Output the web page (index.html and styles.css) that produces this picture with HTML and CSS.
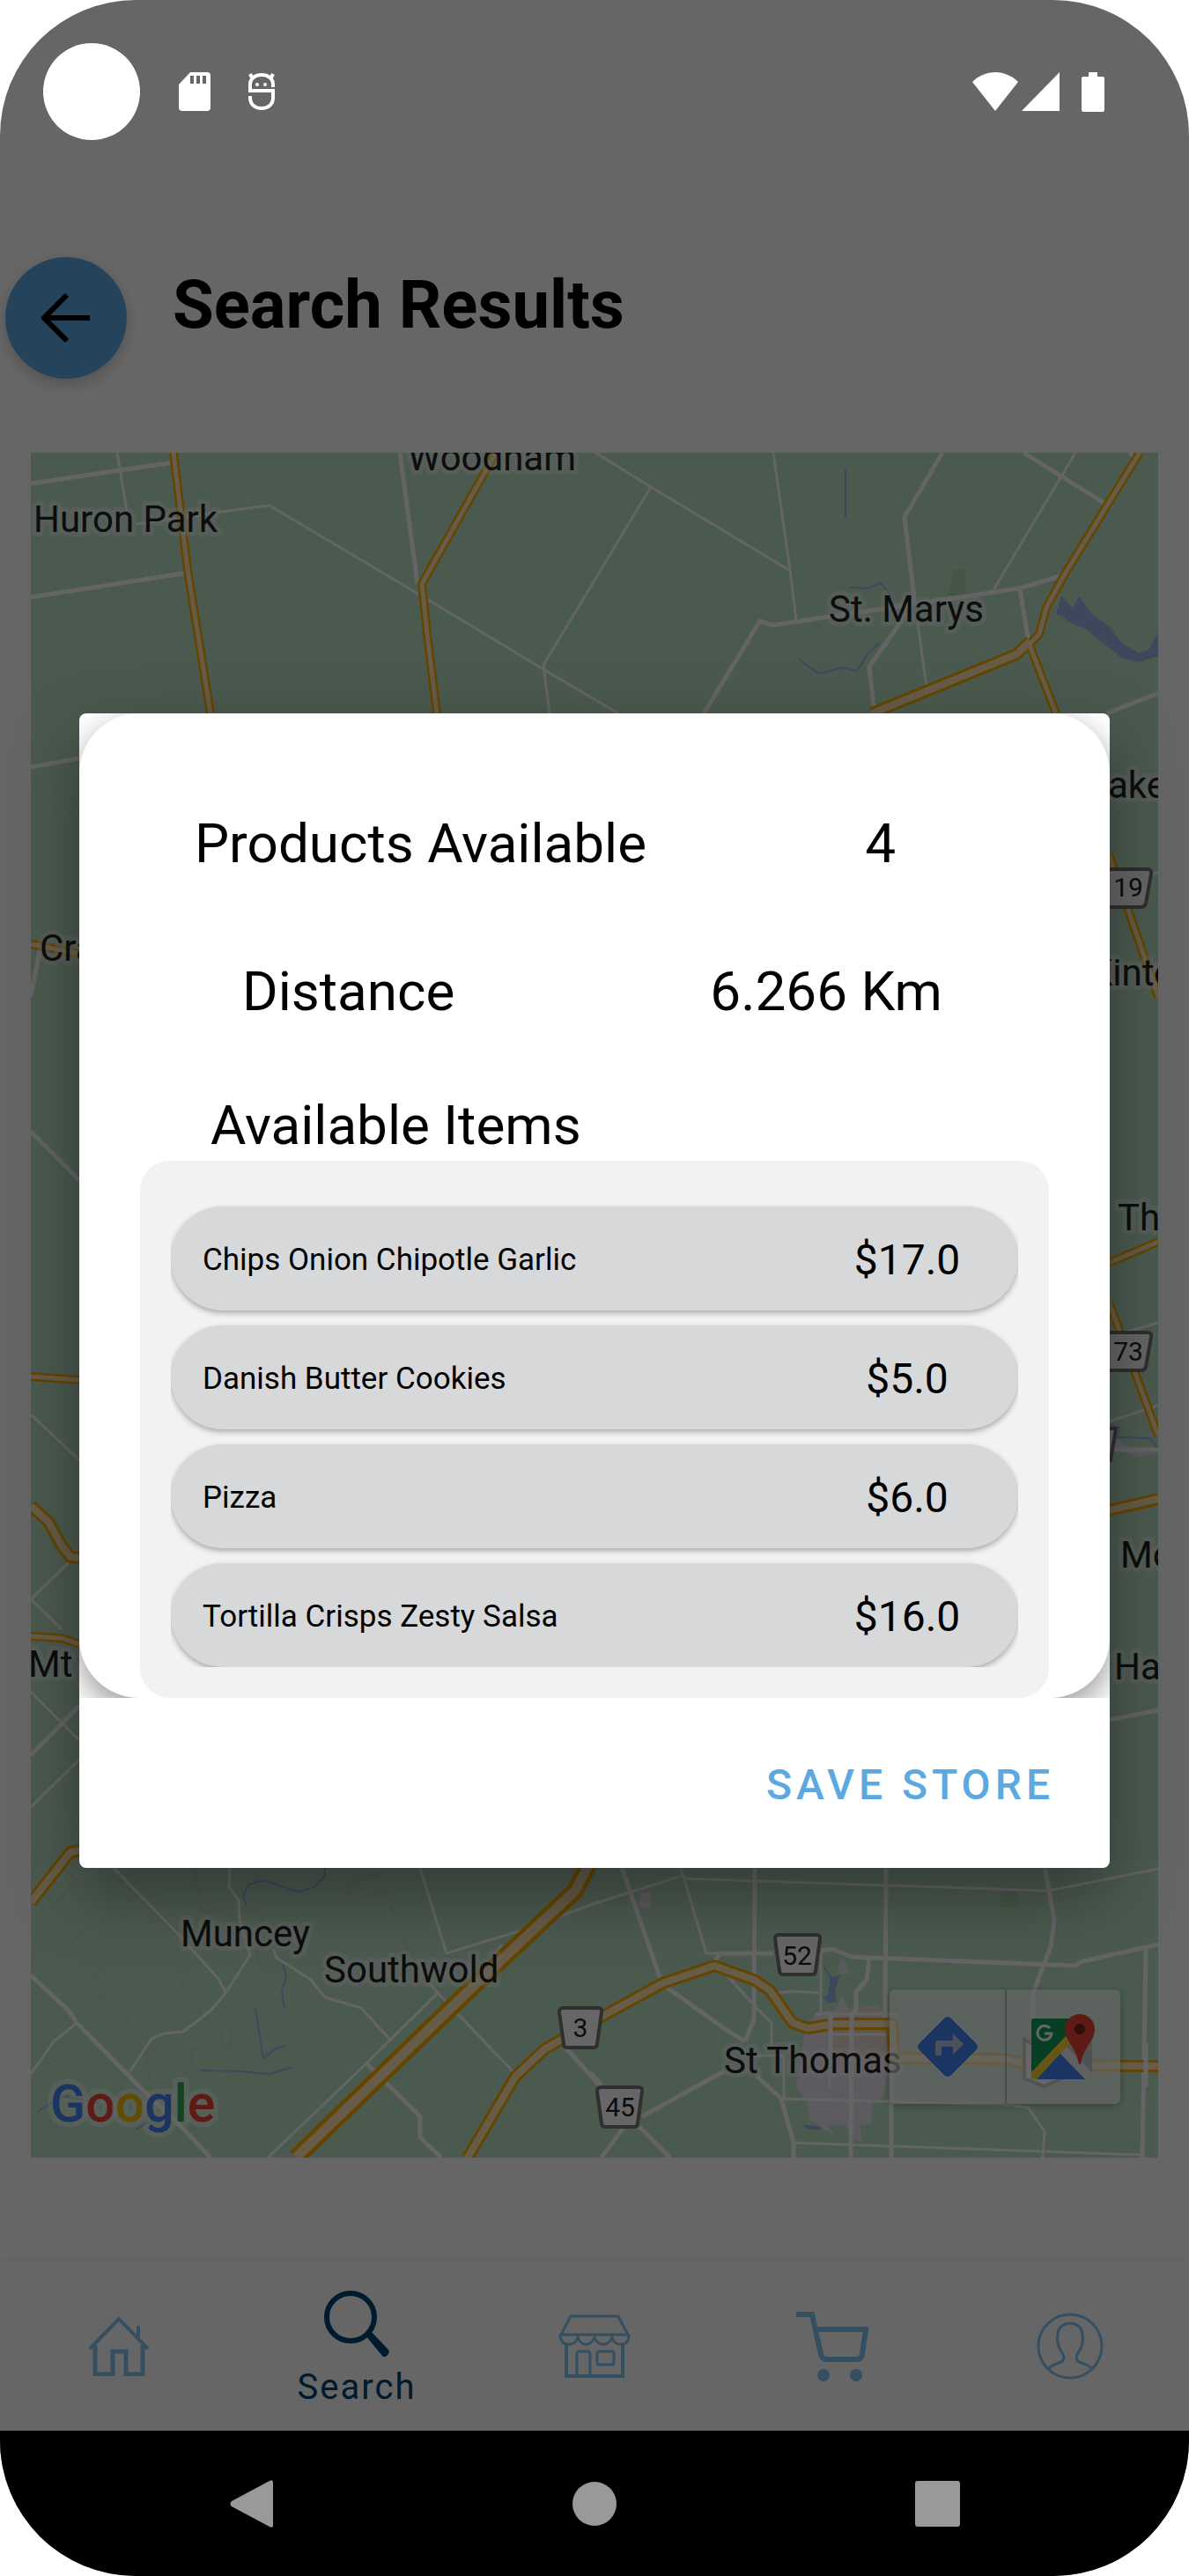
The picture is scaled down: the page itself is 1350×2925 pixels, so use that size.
FILE: index.html
```html
<!DOCTYPE html>
<html lang="en">
<head>
<meta charset="utf-8">
<meta name="viewport" content="width=device-width, initial-scale=1">
<title>Search Results</title>
<link rel="stylesheet" href="styles.css">
</head>
<body>
<div class="phone">
  <header class="status">
    <div class="status__group">
      <span class="status__camera"></span>
      <svg class="status__sd" width="36" height="44" viewBox="0 0 36 44" aria-hidden="true"><path fill="#fff" d="M13 0h19a4 4 0 0 1 4 4v36a4 4 0 0 1-4 4H4a4 4 0 0 1-4-4V14z"/><path fill="#666" d="M13 4h4v9h-4zM20 4h4v9h-4zM27 4h4v9h-4z"/></svg>
      <svg class="status__bug" width="32" height="44" viewBox="0 0 32 44" aria-hidden="true"><g fill="none" stroke="#fff" stroke-width="4"><path d="M5 6 3 2M27 6l2-4M29 17V14C29 7 23 3 16 3S3 7 3 14v7h26v8c0 8-6 12-13 12S3 37 3 29v-2"/></g><circle cx="11" cy="14" r="2" fill="#fff"/><circle cx="20" cy="14" r="2" fill="#fff"/></svg>
    </div>
    <div class="status__group">
      <svg width="52" height="44" viewBox="0 0 52 44" aria-hidden="true"><path fill="#fff" d="M26 0c10 0 19 4 26 11L26 44 0 11C7 4 16 0 26 0z"/></svg>
      <svg class="status__signal" width="43" height="44" viewBox="0 0 43 44" aria-hidden="true"><path fill="#fff" d="M43 0v44H0z"/></svg>
      <svg class="status__battery" width="26" height="45" viewBox="0 0 26 45" aria-hidden="true"><path fill="#fff" d="M8 0h10v5h6a2 2 0 0 1 2 2v36a2 2 0 0 1-2 2H2a2 2 0 0 1-2-2V7a2 2 0 0 1 2-2h6z"/></svg>
    </div>
  </header>

  <main class="app">
    <div class="header">
      <button class="back" type="button" aria-label="Back"><svg width="56" height="56" viewBox="0 0 56 56"><path d="M55 28H4M29 2 3 28l26 26" fill="none" stroke="#000" stroke-width="6"/></svg></button>
      <h1 class="header__title">Search Results</h1>
    </div>

    <div class="map">
      <svg class="map__canvas" viewBox="35 514 1280 1936" role="img" aria-label="Map of nearby stores">
        <defs>
          <path id="thin" d="M197 514 213 647 239 810M563 514 479 663 485 720 496 810M1168 730 1199 810M1294 514 1210 650 1188 690 1180 720 1168 732M35 1072 90 1083M35 1563 90 1567M35 1858 70 1860 90 1867M1259 970 1315 1132M1259 1434 1315 1410M1259 1478 1315 1630"/>
          <path id="wide" d="M1170 728 1154 743 990 810M35 1710 55 1728 70 1755 80 1768 92 1769M1259 1715 1315 1702M35 2160 80 2103 92 2101M531 2450 585 2358 618 2327 683 2290 752 2252 811 2232 856 2248 874 2260 900 2297 917 2303 948 2298H1013L1015 2337 1143 2338 1169 2345 1315 2346"/>
          <path id="main" d="M668 2118 653 2147 540 2253 336 2450"/>
        </defs>
        <rect class="land" x="35" y="514" width="1280" height="1936"/>
        <path class="park" d="M1082 646h14v30h-20zM1137 2148h19v18h-19z"/>
        <path class="town" d="M926 2285 995 2277 1013 2293 1004 2380 991 2387 989 2412 976 2413 979 2432 965 2428 961 2413H939L948 2425 919 2407 917 2387 904 2370 913 2310zM957 2223l8 18h-15zM956 2266l8 18h-16zM728 2149l11 1v17l-14-3zM1259 1628l22 14 34 7-20 6-30-10z"/>
        <path class="sand" d="M969 2277h26l17 22v38l-73-10v-20l26-27z"/>
        <path class="water" d="M1199 697 1205 677 1218 690 1225 677 1240 697 1261 713 1274 730 1292 741 1304 738 1315 718V745L1292 752 1273 747 1248 727 1231 713 1216 708 1206 700zM943 2245l11-2-6 17 2 12-9 3-7-7 6-3zM911 2412l21 3v4l-17-2z"/>
        <path class="creek" d="M906 748 930 765 956 758 973 762 987 740 999 730M960 533v54M965 667l20 1 15-6 16 20M369 2118v12l-13 13-18 5-39-13-17 5-6 13 4 12M321 2230l4 13-5 20 3 17M290 2280l5 33 4 24 13-10 13-5M228 2351l45 1 33 3 27-8M1259 1617l13 5-4 10 37 1 10 11M42 2398l30-18 40 8M154 2418l14-8M936 2233l8 14"/>
        <path class="bounds" d="M76 2125 87 2135 63 2162 78 2177 35 2227M93 2193 81 2207 120 2233 108 2243 118 2258 113 2267 127 2278 134 2272 146 2290 143 2300 157 2310 172 2315 165 2333 170 2362 186 2365M93 2193 122 2225 140 2215 147 2223 160 2212 175 2225 183 2213 194 2220 214 2240 205 2253 226 2275 227 2290M92 2228 83 2236 98 2249 109 2238M54 2234 64 2243 52 2256M221 2118 228 2172 271 2163M392 2142 434 2125M392 2142 398 2159 438 2147 464 2217M280 2165 297 2172 298 2190M290 2215 296 2232 321 2232M321 2282 412 2253M290 2280 300 2276 321 2282M204 2312 215 2326H237V2340M217 2326 218 2348 228 2351M227 2300H249L252 2322 262 2325 263 2300 247 2284M325 2322 326 2342 333 2347"/>
        <g class="road">
          <path d="M133 514 144 580M155 595 244 582 306 574 476 675 617 760 702 810M676 514 739 553 897 648 904 703M739 553 617 755 624 810M878 514 897 648M1042 707 1052 780M1221 514 1128 670M1259 808 1285 800M35 1606 90 1658M35 1816 78 1774M35 1816 70 1850M35 1921 90 1976M35 2052 90 1998M1259 1518 1315 1502M1259 1614 1315 1596M1300 993 1315 991"/>
          <path d="M126 2118 204 2198 248 2247 256 2262M261 2118 260 2142 271 2158 272 2180 284 2220 256 2263 239 2283 208 2307 186 2309 172 2315 147 2353M310 2213 314 2223 353 2248 369 2268 410 2280 442 2315M87 2297 61 2318 35 2355M476 2118 507 2218 598 2190M486 2250 497 2263 588 2358M570 2208 545 2240M497 2263 416 2343 304 2450M631 2178 670 2163 774 2130M776 2133 1190 2147 1315 2122M811 2227 859 2280 876 2297V2327M882 2263 900 2261 930 2263M932 2217V2285M942 2285V2370M926 2287H1018V2337M887 2383 1143 2390 1167 2393 1186 2420 1184 2450M901 2433 1297 2447M855 2334H890V2383M772 2118 802 2218 878 2218M940 2310H1010"/>
        </g>
        <g class="road road--major">
          <path d="M35 549 197 525M35 678 215 650M454 514 474 663M1070 514 1027 587 1038 680 1020 710 987 757 993 810M799 810 863 705 876 710 1158 668 1211 652M1158 668 1168 730M1162 514 1255 572M1283 514 1290 520M1257 810 1315 787M35 871 90 861M35 1132 45 1080M35 1285 90 1340M35 1993 90 1937M1259 1953 1315 1942M1259 1646H1315"/>
          <path d="M35 2243 78 2283 87 2297 169 2380 208 2417 239 2450M416 2343 477 2403V2427L501 2450M642 2325 680 2367M705 2118 752 2253 822 2303 846 2318M859 2357 887 2383 901 2433V2450M857 2118 856 2293 846 2318M1006 2118 1005 2293M1012 2293V2450M811 2227 818 2218H878M932 2215 945 2213 967 2222 1221 2232 1229 2227 1315 2208M1186 2118 1197 2180 1193 2210 1173 2263V2310M1301 2213 1297 2450M987 2223 984 2248 972 2262V2283L967 2287 966 2450M943 2285V2330M822 2352 729 2403M726 2415 761 2450M707 2417 683 2450M670 2353 683 2368"/>
        </g>
        <use class="casing casing--thin" href="#thin"/><use class="casing casing--wide" href="#wide"/><use class="casing casing--main" href="#main"/>
        <use class="lane lane--thin" href="#thin"/><use class="lane lane--wide" href="#wide"/><use class="lane lane--main" href="#main"/>
        <path class="road road--major" d="M943 2285V2310M967 2285V2330M1301 2320V2370"/>
        <path class="shield" d="M1163 2316 1185 2327 1206 2316V2360L1185 2369 1163 2360z"/>
        <g class="shield">
          <path d="M1257 987h46q5 0 4 5l-6 34q-1 4-6 4h-38z"/>
          <path d="M1257 1513h46q5 0 4 5l-6 34q-1 4-6 4h-38z"/>
          <path d="M1250 1622h17l-6 36h-11z"/>
          <path d="M639 2280h40q5 0 4 5l-5 36q0 4-5 4h-28q-5 0-5-4l-5-36q0-5 4-5z"/>
          <path d="M682 2370h43q5 0 4 5l-5 36q0 4-5 4h-31q-5 0-5-4l-5-36q0-5 4-5z"/>
          <path d="M884 2197h43q5 0 4 5l-5 36q0 4-5 4h-31q-5 0-5-4l-5-36q0-5 4-5z"/>
        </g>
        <g class="shield-text">
          <text x="1281" y="1018">19</text><text x="1281" y="1545">73</text><text x="659" y="2313">3</text><text x="704" y="2403">45</text><text x="905" y="2231">52</text>
        </g>
        <g class="place">
          <text x="463" y="534">Woodham</text><text x="38" y="604">Huron Park</text><text x="941" y="706">St. Marys</text>
          <text x="45" y="1091">Cra</text><text x="32" y="1904">Mt</text><text x="1258" y="906">ake</text><text x="1237" y="1119">Kinto</text>
          <text x="1269" y="1397">Th</text><text x="1272" y="1780">Mo</text><text x="1265" y="1907">Ha</text>
          <text x="205" y="2210">Muncey</text><text x="368" y="2251">Southwold</text><text x="822" y="2354">St Thomas</text>
        </g>
        <text class="brand" x="57" y="2409"><tspan fill="#4285f4">G</tspan><tspan fill="#ea4335">o</tspan><tspan fill="#fbbc05">o</tspan><tspan fill="#4285f4">g</tspan><tspan fill="#34a853">l</tspan><tspan fill="#ea4335">e</tspan></text>
      </svg>
      <div class="map__controls">
        <button class="map__control" type="button" aria-label="Directions"><svg width="68" height="68" viewBox="0 0 68 68"><path fill="#4285f4" d="M31 1q3-2 6 0l30 30q2 3 0 6L37 67q-3 2-6 0L1 37q-2-3 0-6z"/><path fill="#b9cbe8" d="M20 44V31q0-4 4-4h16v-8l12 12-12 12v-9H27v10z"/></svg></button>
        <button class="map__control" type="button" aria-label="Open in Google Maps"><svg width="76" height="76" viewBox="0 0 76 76"><path fill="#c9cbd0" d="M4 6h62q4 0 4 4v62q0 3-4 3H4q-3 0-3-3V9q0-3 3-3z"/><path fill="#0f9d58" d="M4 6h42L40 28 1 70V9q0-3 3-3z"/><path fill="#fdd835" d="m1 67 40-42 5 9L7 75H4q-3 0-3-3z"/><path fill="#f1f1f1" d="m34 46 7-8 29 30v4q0 3-4 3h-4z"/><path fill="#4285f4" d="M34 46 62 75H7z"/><path fill="#ea4335" d="M56 1c10 0 17 8 17 17 0 14-13 20-16 40h-2c-3-20-16-26-16-40C39 9 46 1 56 1z"/><circle cx="56" cy="18" r="6" fill="#7b2220"/><path fill="none" stroke="#fff" stroke-width="3" d="M22 17a8 8 0 1 0 2 6h-8"/></svg></button>
      </div>
    </div>

    <nav class="tabs" aria-label="Main">
      <a class="tab" href="#home" aria-label="Home"><svg width="70" height="68" viewBox="0 0 70 68"><g fill="none" stroke="currentColor" stroke-width="4"><path d="M2 37 35 3l33 34M57 24V11"/><path d="M8 33v33h20V40h15v26h19V33" stroke-width="5"/></g></svg></a>
      <a class="tab tab--active" href="#search" aria-current="page"><svg width="74" height="76" viewBox="0 0 74 76"><circle cx="30" cy="30" r="27" fill="none" stroke="currentColor" stroke-width="6"/><path d="m47 51 6-5 20 21q2 3-1 6-3 4-6 1z" fill="currentColor"/></svg><span>Search</span></a>
      <a class="tab" href="#stores" aria-label="Stores"><svg width="82" height="72" viewBox="0 0 82 72"><g fill="none" stroke="currentColor" stroke-width="3"><path d="M14 2h54l11 21H3zM2 23c0 7 4 11 10 11s9-4 10-8c2 5 5 8 9 8s8-3 10-8c2 5 6 8 10 8s8-3 10-8c1 4 4 8 10 8s9-4 9-11"/><path d="M9 33v37h64V33" stroke-width="4"/><path d="M21 70V45q0-3 3-3h9q3 0 3 3v25"/><rect x="44" y="42" width="19" height="15" rx="2"/></g></svg></a>
      <a class="tab" href="#cart" aria-label="Cart"><svg width="82" height="80" viewBox="0 0 82 80"><path d="M0 4h18l10 45q1 6 7 6h34q5 0 6-6l4-28H21" fill="none" stroke="currentColor" stroke-width="6"/><circle cx="31" cy="73" r="7" fill="currentColor"/><circle cx="68" cy="73" r="7" fill="currentColor"/></svg></a>
      <a class="tab" href="#profile" aria-label="Profile"><svg width="76" height="76" viewBox="0 0 76 76"><g fill="none" stroke="currentColor" stroke-width="3"><circle cx="38" cy="38" r="36"/><path d="M13 64c4-6 14-6 17-10 2-4 0-7-2-10-4-5-5-13-4-20 1-8 7-12 14-12s13 4 14 12c1 7 0 15-4 20-2 3-4 6-2 10 3 4 13 4 17 10"/></g></svg></a>
    </nav>
  </main>

  <div class="scrim">
    <section class="dialog" role="dialog" aria-label="Store details">
      <div class="dialog__body">
        <div class="card">
          <div class="fact fact--products"><span>Products Available</span><span>4</span></div>
          <div class="fact fact--distance"><span>Distance</span><span>6.266 Km</span></div>
          <h2 class="card__heading">Available Items</h2>
          <div class="panel">
            <ul class="items">
              <li class="item"><span>Chips Onion Chipotle Garlic</span><span class="item__price">$17.0</span></li>
              <li class="item"><span>Danish Butter Cookies</span><span class="item__price">$5.0</span></li>
              <li class="item"><span>Pizza</span><span class="item__price">$6.0</span></li>
              <li class="item"><span>Tortilla Crisps Zesty Salsa</span><span class="item__price">$16.0</span></li>
            </ul>
          </div>
        </div>
      </div>
      <div class="dialog__actions"><button class="save" type="button">SAVE STORE</button></div>
    </section>
  </div>

  <nav class="sysnav" aria-label="System">
    <button type="button" aria-label="System back"><svg width="56" height="56" viewBox="0 0 56 56"><path fill="#999" d="M49 2q4-2 4 2v49q0 3-4 1L6 31q-3-3 0-6z"/></svg></button>
    <button type="button" aria-label="System home"><svg width="52" height="52" viewBox="0 0 52 52"><circle cx="26" cy="26" r="25" fill="#999"/></svg></button>
    <button type="button" aria-label="Recent apps"><svg width="52" height="52" viewBox="0 0 52 52"><rect width="51" height="52" rx="3" fill="#999"/></svg></button>
  </nav>
</div>
</body>
</html>
```
FILE: styles.css
```css
* { box-sizing: border-box; }

body {
  margin: 0;
  background: #fff;
  color: #000;
  font-family: Roboto, "Liberation Sans", sans-serif;
}

button {
  padding: 0;
  border: 0;
  background: none;
  font: inherit;
  cursor: pointer;
}

svg { display: block; }

.phone {
  position: relative;
  display: flex;
  flex-direction: column;
  min-height: 100vh;
  border-radius: 154px;
  overflow: hidden;
  background: #fff;
}

/* status bar */
.status {
  position: relative;
  z-index: 2;
  display: flex;
  justify-content: space-between;
  align-items: center;
  height: 208px;
  padding: 0 96px 0 49px;
}
.status__group { display: flex; align-items: center; }
.status__camera {
  width: 110px;
  height: 110px;
  border-radius: 50%;
  background: #fff;
}
.status__sd { margin-left: 44px; }
.status__bug { margin-left: 42px; }
.status__signal { margin-left: 4px; }
.status__battery { margin-left: 25px; }

/* app behind the dialog */
.app {
  display: flex;
  flex-direction: column;
  flex: 1;
}
.header {
  display: flex;
  align-items: flex-start;
  gap: 52px;
  padding: 84px 6px;
}
.back {
  display: grid;
  place-items: center;
  width: 138px;
  height: 138px;
  border-radius: 50%;
  background: #5ca8e0;
  box-shadow: 0 6px 16px rgba(0, 0, 0, 0.2);
}
.header__title {
  margin: 0;
  font-size: 76px;
  line-height: 108px;
  font-weight: 700;
}

.map {
  position: relative;
  margin: 0 35px;
}
.map__canvas { width: 100%; height: auto; }
.land { fill: #bbe2c6; }
.park { fill: #aed8b0; }
.town { fill: #ece3f0; }
.sand { fill: #ead9c6; fill-opacity: 0.7; }
.water { fill: #98b4e8; }
.creek, .bounds, .road, .casing, .lane {
  fill: none;
  stroke-linejoin: round;
}
.creek { stroke: #98b4e8; stroke-width: 2; }
.bounds { stroke: #c4d2c8; stroke-width: 3; }
.road { stroke: #fafafa; stroke-width: 3; }
.road--major { stroke-width: 5; }
.casing { stroke: #f9ab00; }
.casing--thin { stroke-width: 10; }
.casing--wide { stroke-width: 14; }
.casing--main { stroke-width: 20; }
.lane { stroke: #ffe7b3; }
.lane--thin { stroke-width: 5; }
.lane--wide { stroke-width: 8; }
.lane--main { stroke-width: 11; }
.shield { fill: #fff; stroke: #777; stroke-width: 4; }
.shield-text {
  fill: #222;
  font-size: 30px;
  text-anchor: middle;
}
.place, .brand {
  paint-order: stroke;
  stroke: rgba(255, 255, 255, 0.4);
  stroke-linejoin: round;
}
.place {
  fill: #222;
  stroke-width: 10px;
  font-size: 42px;
}
.brand {
  stroke-width: 12px;
  font-size: 59px;
  font-weight: 500;
}
.map__controls {
  position: absolute;
  right: 43px;
  bottom: 61px;
  display: flex;
  border-radius: 6px;
  background: rgba(255, 255, 255, 0.65);
  box-shadow: 0 2px 8px rgba(0, 0, 0, 0.3);
}
.map__control {
  display: grid;
  place-items: center;
  width: 131px;
  height: 130px;
}
.map__control + .map__control { border-left: 2px solid #b4beb6; }

.tabs {
  display: grid;
  grid-template-columns: repeat(5, 1fr);
  height: 192px;
  margin-top: auto;
  box-shadow: 0 -2px 6px rgba(0, 0, 0, 0.04);
}
.tab {
  display: flex;
  flex-direction: column;
  align-items: center;
  justify-content: center;
  gap: 10px;
  color: #82c3f5;
  text-decoration: none;
}
.tab--active {
  padding-top: 8px;
  color: #004173;
  font-size: 40px;
  line-height: 48px;
  letter-spacing: 2px;
}

/* dialog */
.scrim {
  position: absolute;
  inset: 0;
  z-index: 1;
  display: grid;
  align-items: center;
  padding: 170px 90px 165px;
  background: rgba(0, 0, 0, 0.6);
}
.dialog {
  border-radius: 8px;
  overflow: hidden;
  background: #fff;
  box-shadow: 0 30px 80px rgba(0, 0, 0, 0.36);
}
.dialog__body { overflow: hidden; }
.card {
  padding: 112px 69px 0;
  border-radius: 68px;
  background: #fff;
  box-shadow: 0 14px 36px rgba(0, 0, 0, 0.4);
}
.fact {
  display: flex;
  justify-content: space-between;
  margin-bottom: 96px;
  font-size: 62px;
  line-height: 72px;
}
.fact--products { padding: 0 174px 0 62px; }
.fact--distance { margin-bottom: 80px; padding: 0 121px 0 116px; }
.card__heading {
  margin: 0 0 4px;
  padding-left: 80px;
  font-size: 62px;
  line-height: 72px;
  font-weight: 400;
}
.panel {
  padding: 35px;
  border-radius: 34px;
  background: #f2f2f2;
}
.items {
  display: flex;
  flex-direction: column;
  gap: 17px;
  margin: 0;
  padding: 17px 0 0;
  overflow: hidden;
  list-style: none;
}
.item {
  display: flex;
  align-items: center;
  justify-content: space-between;
  height: 118px;
  padding: 4px 36px 0;
  border-radius: 59px;
  background: #d7d8da;
  box-shadow: 0 3px 6px rgba(0, 0, 0, 0.3);
  font-size: 35px;
}
.item__price {
  width: 180px;
  font-size: 48px;
  text-align: center;
}
.dialog__actions {
  display: flex;
  justify-content: flex-end;
  align-items: center;
  height: 193px;
  padding: 4px 63px 0;
}
.save {
  color: #5ca8e0;
  font-size: 48px;
  font-weight: 500;
  letter-spacing: 5px;
}

/* system navigation */
.sysnav {
  position: relative;
  z-index: 2;
  display: grid;
  grid-template-columns: repeat(3, 1fr);
  align-items: center;
  height: 165px;
  padding: 0 90px;
  background: #000;
}
.sysnav button { display: grid; place-items: center; }
```
